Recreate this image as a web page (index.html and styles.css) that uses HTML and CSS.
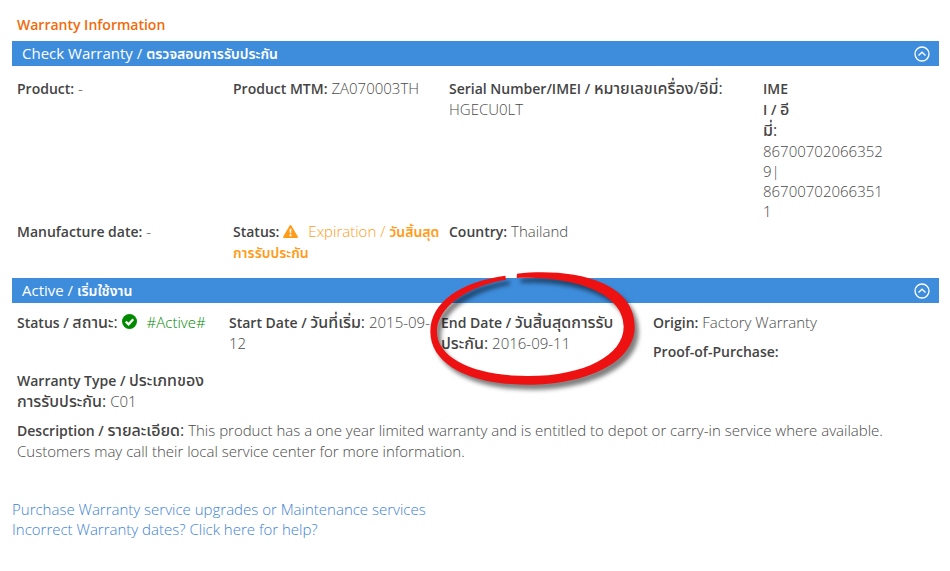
FILE: index.html
```html
<!DOCTYPE html>
<html lang="th">
<head>
    <meta charset="UTF-8">
    <meta name="viewport" content="width=device-width, initial-scale=1.0">
    <title>Warranty Information</title>
    <link rel="stylesheet" href="styles.css">
</head>
<body>
    <main class="container">
        <h1 class="page-title">Warranty Information</h1>

        <section>
            <div class="bar">
                <h2>Check Warranty / <b>ตรวจสอบการรับประกัน</b></h2>
                <button type="button" class="toggle" aria-label="Check Warranty">
                    <svg viewBox="0 0 16 16" width="16" height="16"><circle cx="8" cy="8" r="7"/><path d="M4.5 9.5 8 6.2l3.5 3.3"/></svg>
                </button>
            </div>
            <div class="grid product-grid">
                <p><strong>Product:</strong> -</p>
                <p><strong>Product MTM:</strong> ZA070003TH</p>
                <p><strong>Serial Number/IMEI / <span class="thai">หมายเลขเครื่อง/อีมี่:</span></strong><br>HGECU0LT</p>
                <p class="imei"><strong>IME<br>I / <span class="thai">อี<br>มี่:</span></strong><br>867007020663529|<br>867007020663511</p>
                <p><strong>Manufacture date:</strong> -</p>
                <p><strong>Status:</strong>
                    <span class="expired"><svg class="icon" viewBox="0 0 16 14" width="15" height="13"><path fill="#ff9c1a" d="M8 0c.5 0 .9.3 1.1.7l6.7 11.6c.5.8-.1 1.7-1 1.7H1.2c-.9 0-1.5-.9-1-1.7L6.9.7C7.1.3 7.5 0 8 0z"/><path fill="#fff" d="M7 4h2l-.3 4.8H7.3zM7 10h2v2H7z"/></svg>Expiration / <b>วันสิ้นสุด<br>การรับประกัน</b></span>
                </p>
                <p><strong>Country:</strong> Thailand</p>
            </div>
        </section>

        <section>
            <div class="bar">
                <h2>Active / <b>เริ่มใช้งาน</b></h2>
                <button type="button" class="toggle" aria-label="Active">
                    <svg viewBox="0 0 16 16" width="16" height="16"><circle cx="8" cy="8" r="7"/><path d="M4.5 9.5 8 6.2l3.5 3.3"/></svg>
                </button>
            </div>
            <div class="grid active-grid">
                <p><strong>Status / <span class="thai">สถานะ:</span></strong>
                    <span class="active"><svg class="icon" viewBox="0 0 16 16" width="15" height="15"><circle cx="8" cy="8" r="8" fill="#008a00"/><path d="M4 8.2 7 11l5-5.5" fill="none" stroke="#fff" stroke-width="2.4"/></svg>#Active#</span>
                </p>
                <p><strong>Start Date / <span class="thai">วันที่เริ่ม:</span></strong> 2015-09-<br>12</p>
                <div class="end-date">
                    <p><strong>End Date / <span class="thai">วันสิ้นสุดการรับ<br>ประกัน:</span></strong> 2016-09-11</p>
                    <svg class="marker" viewBox="50 30 630 360" width="210" height="120" aria-hidden="true">
                        <path d="M317 41C400 32 500 36 575 70C640 100 670 145 670 200C670 310 520 374 350 374C170 374 57 310 57 215C57 125 150 65 282 47L284 59C170 78 77 140 77 215C77 295 190 348 350 348C520 348 637 285 637 200C637 100 490 48 316 54Z"/>
                    </svg>
                </div>
                <div class="stack">
                    <p><strong>Origin:</strong> Factory Warranty</p>
                    <p><strong>Proof-of-Purchase:</strong></p>
                </div>
                <p><strong>Warranty Type / <span class="thai">ประเภทของ<br>การรับประกัน:</span></strong> C01</p>
                <p class="description"><strong>Description / <span class="thai">รายละเอียด:</span></strong> This product has a one year limited warranty and is entitled to depot or carry-in service where available. Customers may call their local service center for more information.</p>
            </div>
        </section>

        <nav class="links">
            <a href="#">Purchase Warranty service upgrades or Maintenance services</a>
            <a href="#">Incorrect Warranty dates? Click here for help?</a>
        </nav>
    </main>
</body>
</html>
```

FILE: styles.css
```css
* {
    margin: 0;
    padding: 0;
    box-sizing: border-box;
}

body {
    font-family: "Open Sans", "Noto Sans", "Noto Sans Thai", sans-serif;
    font-size: 15px;
    font-weight: 300;
    line-height: 20px;
    color: #4a4a4a;
    background: #fff;
}

.container {
    padding: 15px 11px 30px 12px;
}

.page-title {
    padding: 0 5px;
    margin-bottom: 6px;
    font-size: 14px;
    font-weight: 600;
    color: #f26a0a;
}

.bar {
    display: flex;
    align-items: center;
    justify-content: space-between;
    height: 25px;
    padding: 0 9px 0 10px;
    background: #3e8ddd;
    color: #fff;
}

.bar h2 {
    font-size: 15px;
    font-weight: 400;
}

b {
    font-size: 14px;
    font-weight: 600;
}

strong {
    font-size: 14px;
    font-weight: 600;
    color: #444;
}

.thai {
    font-size: 16px;
    font-weight: 500;
    line-height: 16px;
}

.toggle {
    display: flex;
    border: 0;
    background: none;
    cursor: pointer;
}

.toggle svg {
    fill: none;
    stroke: #fff;
    stroke-width: 1.3;
}

.grid {
    display: grid;
    row-gap: 8px;
    padding: 12px 0 15px 5px;
}

.product-grid {
    grid-template-columns: 216fr 216fr 314fr 176fr;
    row-gap: 0;
}

.active-grid {
    grid-template-columns: 212fr 212fr 212fr 286fr;
    padding-top: 9px;
}

.grid p {
    white-space: nowrap;
}

.stack {
    display: flex;
    flex-direction: column;
    gap: 8px;
}

.grid .imei {
    width: 124px;
    white-space: normal;
    word-break: break-all;
}

.grid .description {
    grid-column: 1 / -1;
    padding-right: 40px;
    white-space: normal;
}

.icon {
    margin-right: 10px;
    vertical-align: -1px;
}

.expired {
    color: #ff9c1a;
}

.active {
    color: #008a00;
}

.end-date {
    position: relative;
}

/* hand-drawn ring around the end date */
.marker {
    position: absolute;
    top: -42px;
    left: -13px;
    overflow: visible;
    fill: #ee1111;
    filter: drop-shadow(4px 5px 2px rgba(0, 0, 0, 0.5));
    pointer-events: none;
}

.links {
    display: flex;
    flex-direction: column;
    align-items: flex-start;
    margin-top: 23px;
}

.links a {
    color: #3e83d6;
    text-decoration: none;
}
```
